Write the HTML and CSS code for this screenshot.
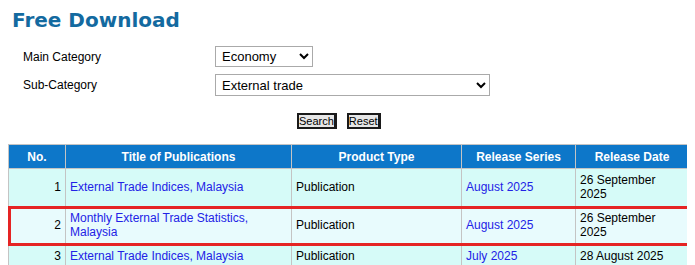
FILE: index.html
```html
<!DOCTYPE html>
<html>
<head>
<meta charset="utf-8">
<link rel="stylesheet" href="styles.css">
</head>
<body>
<h1 class="title">Free Download</h1>
<form class="filter">
  <div class="frow">
    <label class="flabel">Main Category</label>
    <select class="sel sel-main"><option>Economy</option></select>
  </div>
  <div class="frow">
    <label class="flabel">Sub-Category</label>
    <select class="sel sel-sub"><option>External trade</option></select>
  </div>
  <div class="actions">
    <button type="button" class="btn">Search</button>
    <button type="button" class="btn">Reset</button>
  </div>
</form>
<table class="pubs">
  <colgroup>
    <col class="c-no"><col class="c-title"><col class="c-type"><col class="c-series"><col class="c-date">
  </colgroup>
  <thead>
    <tr><th>No.</th><th>Title of Publications</th><th>Product Type</th><th>Release Series</th><th>Release Date</th></tr>
  </thead>
  <tbody>
    <tr>
      <td class="num">1</td>
      <td><a href="#">External Trade Indices, Malaysia</a></td>
      <td>Publication</td>
      <td><a href="#">August 2025</a></td>
      <td>26 September 2025</td>
    </tr>
    <tr class="hl">
      <td class="num">2</td>
      <td><a href="#">Monthly External Trade Statistics, Malaysia</a></td>
      <td>Publication</td>
      <td><a href="#">August 2025</a></td>
      <td>26 September 2025</td>
    </tr>
    <tr>
      <td class="num">3</td>
      <td><a href="#">External Trade Indices, Malaysia</a></td>
      <td>Publication</td>
      <td><a href="#">July 2025</a></td>
      <td>28 August 2025</td>
    </tr>
  </tbody>
</table>
</body>
</html>
```
FILE: styles.css
```css
body {
  margin: 8px;
  font-family: "Liberation Sans", Arial, sans-serif;
  font-size: 12px;
  color: #000;
  background: #fff;
}
.title {
  margin: 0 0 0 4px;
  font-family: "DejaVu Sans", Verdana, sans-serif;
  font-weight: bold;
  font-size: 20px;
  line-height: 24px;
  color: #136aa0;
}
.filter {
  margin: 14px 0 0 15px;
}
.frow {
  display: grid;
  grid-template-columns: 192px auto;
  align-items: center;
  margin-bottom: 7px;
}
.flabel {
  font-size: 12px;
}
.sel {
  font-family: "Liberation Sans", Arial, sans-serif;
  font-size: 13px;
  height: 21px;
  border: 1px solid #aaa;
  border-radius: 0;
  background: #fff;
  color: #000;
  padding: 0 2px;
}
.sel-main { width: 98px; }
.sel-sub { width: 275px; height: 22px; }
.actions {
  display: flex;
  gap: 10px;
  padding-left: 274px;
  margin-top: 17px;
}
.btn {
  font-family: "Liberation Sans", Arial, sans-serif;
  font-size: 11px;
  height: 16px;
  padding: 0;
  line-height: 12px;
  background: #e6e6e6;
  color: #000;
  border: 2px solid #1a1a1a;
  border-right-width: 3px;
  border-radius: 0;
}
.pubs {
  margin-top: 15px;
  width: 680px;
  border-collapse: collapse;
  table-layout: fixed;
}
.c-no { width: 57px; }
.c-title { width: 226px; }
.c-type { width: 170px; }
.c-series { width: 114px; }
.c-date { width: 113px; }
.pubs th {
  background: #0d77c9;
  color: #fff;
  font-weight: bold;
  height: 23px;
  padding: 0 4px;
  border: 1px solid #c4c4c4;
  text-align: center;
}
.pubs td {
  background: #d6fbf8;
  border: 1px solid #c4c4c4;
  padding: 4px 4px 5px;
  line-height: 14px;
  vertical-align: middle;
}
.pubs td.num { text-align: right; }
.pubs a {
  color: #2222e6;
  text-decoration: none;
}
.pubs tr.hl td { background: #e8fbfd; }
.pubs tr.hl {
  outline: 3px solid #e52424;
  outline-offset: -2px;
}
```
